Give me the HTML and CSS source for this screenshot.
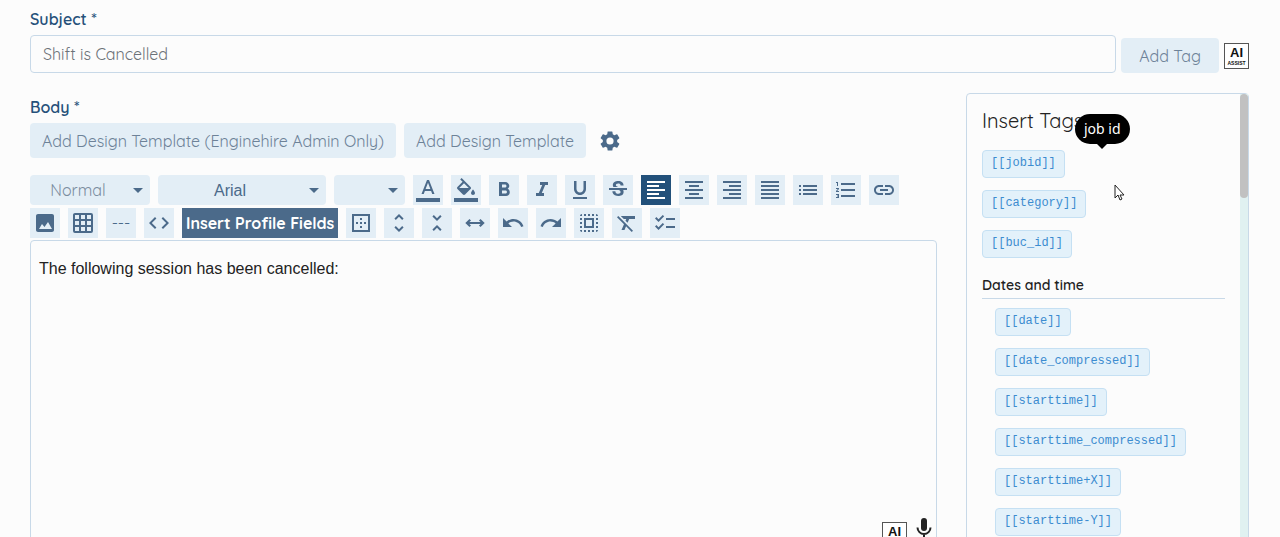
FILE: index.html
```
<!DOCTYPE html>
<html lang="en">
<head>
    <meta charset="UTF-8">
    <meta name="viewport" content="width=device-width, initial-scale=1.0">
    <title>Edit Message</title>
    <link rel="stylesheet" href="styles.css">
</head>
<body>
    <form class="message-form">
        <label class="field-label" for="subject">Subject *</label>
        <div class="subject-row">
            <input type="text" id="subject" class="subject-input" value="Shift is Cancelled">
            <button type="button" class="btn btn-tag">Add Tag</button>
            <button type="button" class="ai-assist" title="AI Assist"><span class="ai-big">AI</span><span class="ai-small">ASSIST</span></button>
        </div>

        <div class="body-row">
            <div class="editor-column">
                <label class="field-label" for="editor">Body *</label>
                <div class="template-row">
                    <button type="button" class="btn">Add Design Template (Enginehire Admin Only)</button>
                    <button type="button" class="btn">Add Design Template</button>
                    <button type="button" class="gear" aria-label="Settings">
                        <svg viewBox="0 0 24 24"><path d="M19.14 12.94c.04-.3.06-.61.06-.94 0-.32-.02-.64-.07-.94l2.03-1.58a.49.49 0 0 0 .12-.61l-1.92-3.32a.49.49 0 0 0-.59-.22l-2.39.96c-.5-.38-1.03-.7-1.62-.94l-.36-2.54a.48.48 0 0 0-.48-.41h-3.84c-.24 0-.43.17-.47.41l-.36 2.54c-.59.24-1.13.57-1.62.94l-2.39-.96a.48.48 0 0 0-.59.22L2.74 8.87c-.12.21-.08.47.12.61l2.03 1.58c-.05.3-.09.63-.09.94s.02.64.07.94l-2.03 1.58a.49.49 0 0 0-.12.61l1.92 3.32c.12.22.37.29.59.22l2.39-.96c.5.38 1.03.7 1.62.94l.36 2.54c.05.24.24.41.48.41h3.84c.24 0 .44-.17.47-.41l.36-2.54c.59-.24 1.13-.56 1.62-.94l2.39.96c.22.08.47 0 .59-.22l1.92-3.32a.48.48 0 0 0-.12-.61zM12 15.6a3.6 3.6 0 1 1 0-7.2 3.6 3.6 0 0 1 0 7.2z"/></svg>
                    </button>
                </div>

                <div class="toolbar">
                    <select class="tool-select select-style" aria-label="Paragraph style"><option>Normal</option></select>
                    <select class="tool-select select-font" aria-label="Font"><option>Arial</option></select>
                    <select class="tool-select select-size" aria-label="Font size"><option></option></select>
                    <button type="button" class="tool" aria-label="Text color"><svg viewBox="0 0 24 24"><path d="M0 20h24v4H0zM11 2 5.5 16h2.25l1.12-3h6.25l1.12 3h2.25L13 2h-2zm-1.38 9L12 4.67 14.38 11H9.62z"/></svg></button>
                    <button type="button" class="tool" aria-label="Background color"><svg viewBox="0 0 24 24"><path d="M16.56 8.94 7.62 0 6.21 1.41l2.38 2.38-5.15 5.15a1.49 1.49 0 0 0 0 2.12l5.5 5.5c.29.29.68.44 1.06.44s.77-.15 1.06-.44l5.5-5.5c.59-.58.59-1.53 0-2.12zM5.21 10 10 5.21 14.79 10H5.21zM19 11.5s-2 2.17-2 3.5c0 1.1.9 2 2 2s2-.9 2-2c0-1.33-2-3.5-2-3.5zM0 20h24v4H0z"/></svg></button>
                    <button type="button" class="tool" aria-label="Bold"><svg viewBox="0 0 24 24"><path d="M15.6 10.79c.97-.67 1.65-1.77 1.65-2.79 0-2.26-1.75-4-4-4H7v14h7.04c2.09 0 3.71-1.7 3.71-3.79 0-1.52-.86-2.82-2.15-3.42zM10 6.5h3c.83 0 1.5.67 1.5 1.5s-.67 1.5-1.5 1.5h-3v-3zm3.5 9H10v-3h3.5c.83 0 1.5.67 1.5 1.5s-.67 1.5-1.5 1.5z"/></svg></button>
                    <button type="button" class="tool" aria-label="Italic"><svg viewBox="0 0 24 24"><path d="M10 4v3h2.21l-3.42 8H6v3h8v-3h-2.21l3.42-8H18V4z"/></svg></button>
                    <button type="button" class="tool" aria-label="Underline"><svg viewBox="0 0 24 24"><path d="M12 17c3.31 0 6-2.69 6-6V3h-2.5v8c0 1.93-1.57 3.5-3.5 3.5S8.5 12.93 8.5 11V3H6v8c0 3.31 2.69 6 6 6zm-7 2v2h14v-2H5z"/></svg></button>
                    <button type="button" class="tool" aria-label="Strikethrough"><svg viewBox="0 0 24 24"><path d="M6.85 7.08C6.85 4.37 9.45 3 12.24 3c1.64 0 3 .49 3.9 1.28.77.65 1.46 1.73 1.46 3.24h-3.01c0-.31-.05-.59-.15-.85-.29-.86-1.2-1.28-2.25-1.28-1.86 0-2.34 1.02-2.34 1.7 0 .48.25.88.74 1.21.38.25.77.48 1.41.7H7.39c-.21-.34-.54-.89-.54-1.92zM21 12v-2H3v2h9.62c1.15.45 1.96.75 1.96 1.97 0 1-.81 1.67-2.28 1.67-1.54 0-2.93-.54-2.93-2.51H6.4c0 .55.08 1.13.24 1.58.81 2.29 3.29 3.3 5.67 3.3 2.27 0 5.3-.89 5.3-4.05 0-.3-.01-1.16-.48-1.94H21V12z"/></svg></button>
                    <button type="button" class="tool active" aria-label="Align left"><svg viewBox="0 0 24 24"><path d="M15 15H3v2h12v-2zm0-8H3v2h12V7zM3 13h18v-2H3v2zm0 8h18v-2H3v2zM3 3v2h18V3H3z"/></svg></button>
                    <button type="button" class="tool" aria-label="Align center"><svg viewBox="0 0 24 24"><path d="M7 15v2h10v-2H7zm-4 6h18v-2H3v2zm0-8h18v-2H3v2zm4-6v2h10V7H7zM3 3v2h18V3H3z"/></svg></button>
                    <button type="button" class="tool" aria-label="Align right"><svg viewBox="0 0 24 24"><path d="M3 21h18v-2H3v2zm6-4h12v-2H9v2zm-6-4h18v-2H3v2zm6-4h12V7H9v2zM3 3v2h18V3H3z"/></svg></button>
                    <button type="button" class="tool" aria-label="Justify"><svg viewBox="0 0 24 24"><path d="M3 21h18v-2H3v2zm0-4h18v-2H3v2zm0-4h18v-2H3v2zm0-4h18V7H3v2zm0-6v2h18V3H3z"/></svg></button>
                    <button type="button" class="tool" aria-label="Bulleted list"><svg viewBox="0 0 24 24"><path d="M3 13h2v-2H3v2zm0 4h2v-2H3v2zm0-8h2V7H3v2zm4 4h14v-2H7v2zm0 4h14v-2H7v2zM7 7v2h14V7H7z"/></svg></button>
                    <button type="button" class="tool" aria-label="Numbered list"><svg viewBox="0 0 24 24"><path d="M2 17h2v.5H3v1h1v.5H2v1h3v-4H2v1zm1-9h1V4H2v1h1v3zm-1 3h1.8L2 13.1v.9h3v-1H3.2L5 10.9V10H2v1zm5-6v2h14V5H7zm0 14h14v-2H7v2zm0-6h14v-2H7v2z"/></svg></button>
                    <button type="button" class="tool" aria-label="Link"><svg viewBox="0 0 24 24"><path d="M3.9 12c0-1.71 1.39-3.1 3.1-3.1h4V7H7c-2.76 0-5 2.24-5 5s2.24 5 5 5h4v-1.9H7c-1.71 0-3.1-1.39-3.1-3.1zM8 13h8v-2H8v2zm9-6h-4v1.9h4c1.71 0 3.1 1.39 3.1 3.1s-1.39 3.1-3.1 3.1h-4V17h4c2.76 0 5-2.24 5-5s-2.24-5-5-5z"/></svg></button>
                    <button type="button" class="tool" aria-label="Image"><svg viewBox="0 0 24 24"><path d="M21 19V5c0-1.1-.9-2-2-2H5c-1.1 0-2 .9-2 2v14c0 1.1.9 2 2 2h14c1.1 0 2-.9 2-2zM6 18l3-5 2.500 3 3.500-5 4 7z" fill-rule="evenodd"/></svg></button>
                    <button type="button" class="tool" aria-label="Table"><svg viewBox="0 0 24 24"><path fill-rule="evenodd" d="M4 2h16a2 2 0 0 1 2 2v16a2 2 0 0 1-2 2H4a2 2 0 0 1-2-2V4c0-1.1.9-2 2-2zm0 2v4h4V4zm6 0v4h4V4zm6 0v4h4V4zM4 10v4h4v-4zm6 0v4h4v-4zm6 0v4h4v-4zM4 16v4h4v-4zm6 0v4h4v-4zm6 0v4h4v-4z"/></svg></button>
                    <button type="button" class="tool" aria-label="Horizontal rule">---</button>
                    <button type="button" class="tool" aria-label="Code view"><svg viewBox="0 0 24 24"><path d="M9.4 16.6 4.8 12l4.6-4.6L8 6l-6 6 6 6 1.4-1.4zm5.2 0 4.6-4.6-4.6-4.6L16 6l6 6-6 6-1.4-1.4z"/></svg></button>
                    <button type="button" class="tool-profile">Insert Profile Fields</button>
                    <button type="button" class="tool" aria-label="Borders"><svg viewBox="0 0 24 24"><path d="M13 7h-2v2h2V7zm0 4h-2v2h2v-2zm4 0h-2v2h2v-2zM3 3v18h18V3H3zm16 16H5V5h14v14zm-6-4h-2v2h2v-2zm-4-4H7v2h2v-2z"/></svg></button>
                    <button type="button" class="tool" aria-label="Expand"><svg viewBox="0 0 24 24"><path d="M12 5.83 15.17 9l1.41-1.41L12 3 7.41 7.59 8.83 9 12 5.83zm0 12.34L8.83 15l-1.41 1.41L12 21l4.59-4.59L15.17 15 12 18.17z"/></svg></button>
                    <button type="button" class="tool" aria-label="Collapse"><svg viewBox="0 0 24 24"><path d="M7.41 18.59 8.83 20 12 16.83 15.17 20l1.41-1.41L12 14l-4.59 4.59zm9.18-13.18L15.17 4 12 7.17 8.83 4 7.41 5.41 12 10l4.59-4.59z"/></svg></button>
                    <button type="button" class="tool" aria-label="Full width"><svg viewBox="0 0 24 24"><path d="M6.5 8 8 9.5 6.4 11h11.2L16 9.5 17.500 8l4.200 4-4.200 4-1.500-1.500 1.600-1.500H6.400L8 14.500 6.500 16l-4.200-4z"/></svg></button>
                    <button type="button" class="tool" aria-label="Undo"><svg viewBox="0 0 24 24"><path d="M12.5 8c-2.65 0-5.05.99-6.9 2.6L2 7v9h9l-3.62-3.62c1.39-1.16 3.16-1.88 5.12-1.88 3.54 0 6.55 2.31 7.6 5.5l2.37-.78C21.08 11.03 17.15 8 12.5 8z"/></svg></button>
                    <button type="button" class="tool" aria-label="Redo"><svg viewBox="0 0 24 24"><path d="M18.4 10.6C16.55 8.99 14.15 8 11.5 8c-4.65 0-8.58 3.03-9.96 7.22L3.9 16c1.05-3.19 4.05-5.5 7.6-5.5 1.95 0 3.73.72 5.12 1.88L13 16h9V7l-3.6 3.6z"/></svg></button>
                    <button type="button" class="tool" aria-label="Select all"><svg viewBox="0 0 24 24"><path d="M3 5h2V3c-1.1 0-2 .9-2 2zm0 8h2v-2H3v2zm4 8h2v-2H7v2zM3 9h2V7H3v2zm10-6h-2v2h2V3zm6 0v2h2c0-1.1-.9-2-2-2zM5 21v-2H3c0 1.1.9 2 2 2zm-2-4h2v-2H3v2zM9 3H7v2h2V3zm2 18h2v-2h-2v2zm8-8h2v-2h-2v2zm0 8c1.1 0 2-.9 2-2h-2v2zm0-12h2V7h-2v2zm0 8h2v-2h-2v2zm-4 4h2v-2h-2v2zm0-16h2V3h-2v2zM7 17h10V7H7v10zm2-8h6v6H9V9z"/></svg></button>
                    <button type="button" class="tool" aria-label="Clear formatting"><svg viewBox="0 0 24 24"><path d="M3.27 5 2 6.27l6.97 6.97L6.5 19h3l1.57-3.66L16.73 21 18 19.73 3.55 5.27 3.27 5zM6 5v.18L8.82 8h2.4l-.72 1.68 2.1 2.1L14.21 8H20V5H6z"/></svg></button>
                    <button type="button" class="tool" aria-label="Checklist"><svg viewBox="0 0 24 24"><path d="M22 7h-9v2h9V7zm0 8h-9v2h9v-2zM5.54 11 2 7.46l1.41-1.41 2.12 2.12 4.24-4.24 1.41 1.41L5.54 11zm0 8L2 15.46l1.41-1.41 2.12 2.12 4.24-4.24 1.41 1.41L5.54 19z"/></svg></button>
                </div>

                <div class="editor-box">
                    <textarea id="editor" class="editor">The following session has been cancelled:</textarea>
                    <div class="editor-actions">
                        <button type="button" class="ai-assist" title="AI Assist"><span class="ai-big">AI</span><span class="ai-small">ASSIST</span></button>
                        <button type="button" class="mic" aria-label="Dictate">
                            <svg viewBox="0 0 16 24"><rect x="5" y="0" width="6" height="13" rx="3"/><path d="M1.5 9.5a6.5 6.5 0 0 0 13 0M8 16v5M4 21.5h8" fill="none" stroke="currentColor" stroke-width="2"/></svg>
                        </button>
                    </div>
                </div>
            </div>

            <aside class="tag-panel">
                <div class="tag-content">
                    <h2>Insert Tags</h2>
                    <div class="tag-list">
                        <button type="button" class="tag">[[jobid]]</button>
                        <button type="button" class="tag">[[category]]</button>
                        <button type="button" class="tag">[[buc_id]]</button>
                    </div>
                    <h3>Dates and time</h3>
                    <div class="tag-list nested">
                        <button type="button" class="tag">[[date]]</button>
                        <button type="button" class="tag">[[date_compressed]]</button>
                        <button type="button" class="tag">[[starttime]]</button>
                        <button type="button" class="tag">[[starttime_compressed]]</button>
                        <button type="button" class="tag">[[starttime+X]]</button>
                        <button type="button" class="tag">[[starttime-Y]]</button>
                    </div>
                    <div class="tooltip" role="tooltip">job id</div>
                    <svg class="pointer" viewBox="0 0 12 18"><path d="M1 1v13l3-3 2 5 2-1-2-4h4z" fill="#fff" stroke="#222"/></svg>
                </div>
                <div class="scroll-track"><div class="scroll-thumb"></div></div>
            </aside>
        </div>
    </form>
</body>
</html>
```
FILE: styles.css
```
* {
    box-sizing: border-box;
}

html {
    overflow: hidden;
}

body {
    margin: 0;
    background: #fcfcfc;
    color: #222;
    font-family: Quicksand, Lato, sans-serif;
    font-size: 16px;
}

button, input, select, textarea {
    font: inherit;
    margin: 0;
    padding: 0;
    border: none;
}

button {
    cursor: pointer;
    background: none;
}

svg {
    display: block;
    fill: currentColor;
}

.message-form {
    padding: 7px 31px 0 30px;
}

.field-label {
    display: block;
    line-height: 24px;
    color: #26517a;
    font-weight: 600;
}

.subject-row {
    display: flex;
    align-items: flex-end;
    gap: 5px;
    margin-top: 4px;
}

.subject-input {
    flex: 1;
    min-width: 0;
    height: 38px;
    padding: 0 12px;
    background: #fcfcfc;
    border: 1px solid #c8d9e8;
    border-radius: 4px;
    color: #6c7278;
}

.btn {
    height: 35px;
    padding: 0 12px;
    background: #e3eef6;
    border-radius: 4px;
    color: #6d8298;
    white-space: nowrap;
}

.btn-tag {
    padding: 0 18px;
}

.ai-assist {
    display: flex;
    flex-direction: column;
    align-items: center;
    justify-content: center;
    width: 25px;
    height: 26px;
    margin-bottom: 4px;
    background: #fff;
    border: 1px solid #555;
    color: #111;
    font-family: "Liberation Sans", Arial, sans-serif;
    font-weight: bold;
}

.ai-big {
    font-size: 13px;
    line-height: 13px;
}

.ai-small {
    font-size: 5px;
    line-height: 8px;
}

.body-row {
    display: flex;
    gap: 29px;
    margin-top: 20px;
}

.editor-column {
    flex: 1;
    min-width: 0;
    padding-top: 2px;
}

.template-row {
    display: flex;
    align-items: center;
    gap: 8px;
    margin-top: 4px;
}

.gear {
    margin-left: 4px;
    color: #4b6a8a;
}

.gear svg {
    width: 24px;
    height: 24px;
}

.toolbar {
    display: flex;
    flex-wrap: wrap;
    gap: 3px 8px;
    margin-top: 17px;
    padding: 0 30px 2px 0;
    color: #4b6a8a;
}

.tool {
    display: flex;
    align-items: center;
    justify-content: center;
    width: 30px;
    height: 30px;
    background: #e3eef6;
    color: #4b6a8a;
}

.tool svg {
    width: 24px;
    height: 24px;
}

.tool.active {
    background: #22507a;
    color: #fff;
}

.tool-select {
    height: 30px;
    padding: 0 24px 0 0;
    appearance: none;
    background: #e3eef6 url("data:image/svg+xml,%3Csvg xmlns='http://www.w3.org/2000/svg' width='10' height='5'%3E%3Cpath d='M0 0h10L5 5z' fill='%234b6a8a'/%3E%3C/svg%3E") no-repeat right 7px center;
    border-radius: 4px;
    color: #4b6a8a;
    text-align: center;
    text-align-last: center;
}

.select-style {
    width: 120px;
    color: #7a8c9e;
}

.select-font {
    width: 168px;
    font-family: "Liberation Sans", Arial, sans-serif;
}

.select-size {
    width: 71px;
}

.tool-profile {
    height: 30px;
    padding: 0 4px;
    background: #4b6a8a;
    color: #fff;
    font-weight: bold;
}

.editor-box {
    position: relative;
    border: 1px solid #c8d9e8;
    border-radius: 4px;
}

.editor {
    display: block;
    width: 100%;
    height: 320px;
    padding: 18px 8px;
    background: transparent;
    resize: none;
    color: #222;
    font-family: "Liberation Sans", Arial, sans-serif;
    line-height: 20px;
}

.editor-actions {
    position: absolute;
    right: 4px;
    bottom: 13px;
    display: flex;
    align-items: flex-end;
    gap: 9px;
}

.editor-actions .ai-assist {
    margin-bottom: 0;
}

.mic {
    padding-bottom: 6px;
    color: #222;
}

.mic svg {
    width: 16px;
    height: 24px;
}

.tag-panel {
    display: flex;
    width: 283px;
    border: 1px solid #c8d9e8;
    border-radius: 4px;
}

.tag-content {
    position: relative;
    flex: 1;
    padding: 14px 15px;
}

.tag-content h2 {
    margin: 0;
    font-size: 20px;
    line-height: 26px;
    font-weight: normal;
}

.tag-content h3 {
    margin: 17px 0 9px;
    padding-bottom: 3px;
    border-bottom: 1px solid #c8d9e8;
    font-size: 14px;
    line-height: 20px;
    font-weight: 600;
}

.tag-list {
    display: flex;
    flex-direction: column;
    align-items: flex-start;
    gap: 12px;
    margin-top: 16px;
}

.tag-list.nested {
    margin-top: 0;
    padding-left: 13px;
}

.tag {
    height: 28px;
    padding: 0 8px 2px;
    background: #e3f1fa;
    border: 1px solid #c5e0f3;
    border-radius: 4px;
    color: #3c8cd0;
    font-family: "Liberation Mono", "Courier New", monospace;
    font-size: 12px;
}

.tooltip {
    position: absolute;
    top: 20px;
    left: 108px;
    padding: 0 9px;
    background: #000;
    border-radius: 15px;
    color: #fff;
    font-family: "Noto Sans", sans-serif;
    font-size: 14px;
    line-height: 30px;
}

.tooltip::after {
    content: "";
    position: absolute;
    top: 100%;
    left: 50%;
    margin-left: -5px;
    border: 5px solid transparent;
    border-top-color: #000;
    border-bottom: none;
}

.pointer {
    position: absolute;
    top: 90px;
    left: 147px;
    width: 12px;
    height: 18px;
}

.scroll-track {
    width: 8px;
    background: #e0f1f1;
}

.scroll-thumb {
    height: 104px;
    background: #c1c1c1;
    border-radius: 4px;
}
```
